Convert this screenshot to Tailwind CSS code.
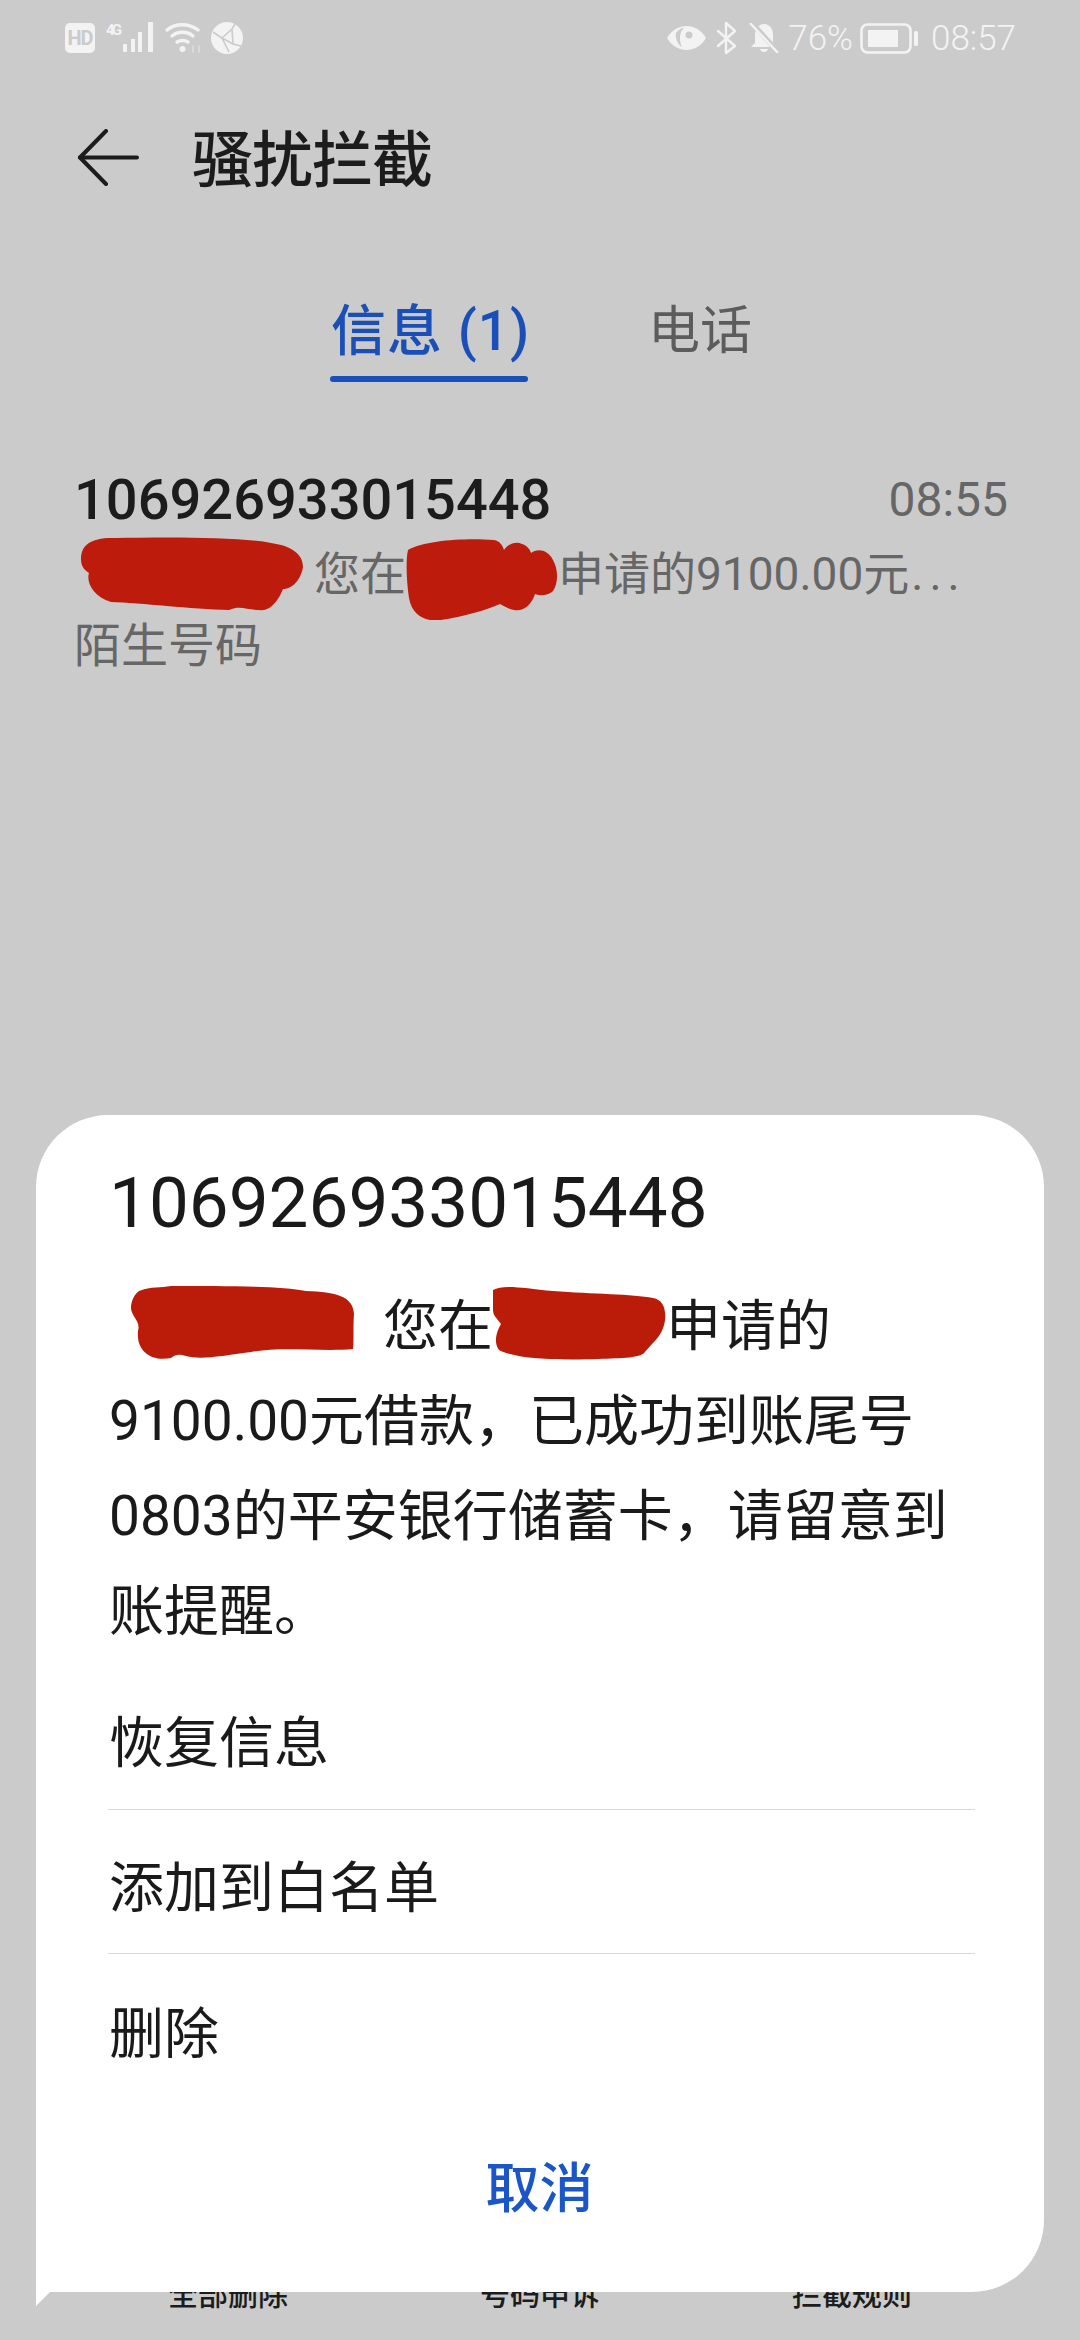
<!DOCTYPE html>
<html lang="zh-CN">
<head>
    <meta charset="UTF-8">
    <meta name="viewport" content="width=device-width, initial-scale=1.0">
    <title>骚扰拦截</title>
    <script src="https://cdn.jsdelivr.net/npm/@tailwindcss/browser@4"></script>
</head>
<body class="bg-[#cbcbcb]">
<div class="relative w-[1080px] h-[2340px] overflow-hidden flex flex-col bg-[#cbcbcb] font-['Roboto','Noto_Sans_CJK_SC',sans-serif]">

    <!-- Status bar -->
    <div class="h-[76px] pt-[22px] pl-[65px] pr-[64px] flex items-start justify-between text-[#f3f3f3]">
        <div class="flex items-center h-[32px]">
            <div class="w-[30px] h-[30px] rounded-[5px] bg-[#f3f3f3] flex items-center justify-center text-[#cbcbcb] text-[20px] font-bold leading-none tracking-[-1px]">HD</div>
            <svg class="w-[49px] h-[32px] ml-[11px]" viewBox="0 0 49 32" fill="#f3f3f3">
                <text x="0" y="13" font-size="15" font-weight="700" font-family="Roboto" textLength="16">4G</text>
                <rect x="17" y="22" width="4" height="8" rx="1"/>
                <rect x="25" y="17" width="4" height="13"/>
                <rect x="32" y="10" width="4" height="20"/>
                <rect x="42" y="0" width="5" height="30"/>
            </svg>
            <svg class="w-[37px] h-[32px] ml-[10px]" viewBox="0 0 37 32" fill="none" stroke="#f3f3f3" stroke-width="3.4" stroke-linecap="round">
                <path d="M2 8C10 1 24 1 33 8"/>
                <path d="M7 14C13 9 22 9 28 14"/>
                <path d="M12 20C15 18 20 18 23 20"/>
                <circle cx="17.500" cy="27" r="3" fill="#f3f3f3" stroke="none"/>
                <path d="M28 24V30M34 24V30" stroke="#dedede" stroke-width="1.600"/>
            </svg>
            <svg class="w-[32px] h-[32px] ml-[9px]" viewBox="0 0 32 32">
                <circle cx="16" cy="16" r="16" fill="#f3f3f3"/>
                <path d="M2 10L11 16L18 30M11 16L21 7L24 2M21 7L22 22L30 24M11 16L22 22" fill="none" stroke="#cbcbcb" stroke-width="1.600"/>
            </svg>
        </div>
        <div class="flex items-center h-[32px]">
            <svg class="w-[39px] h-[26px]" viewBox="0 0 39 26">
                <path d="M0 13C9 -3 30 -3 39 13C30 29 9 29 0 13Z" fill="#f3f3f3"/>
                <path d="M9 8C11 5 14 3 17 3C12 7 12 16 15 22C11 20 8 13 9 8Z" fill="#cbcbcb"/>
                <circle cx="22" cy="10" r="3.500" fill="#cbcbcb"/>
            </svg>
            <svg class="w-[21px] h-[34px] ml-[10px]" viewBox="0 0 21 34" fill="none" stroke="#f3f3f3" stroke-width="2.400" stroke-linejoin="round" stroke-linecap="round">
                <path d="M2 10L19 25L10 32L10 2L19 10L2 25"/>
            </svg>
            <svg class="w-[30px] h-[30px] ml-[12px]" viewBox="0 0 30 30">
                <path d="M15 1C9 1 6 6 6 12V20L2 24H28L24 20V12C24 6 21 1 15 1Z" fill="#f3f3f3"/>
                <path d="M11 26H19C18 30 12 30 11 26Z" fill="#f3f3f3"/>
                <path d="M3 0L30 30" stroke="#cbcbcb" stroke-width="5"/>
                <path d="M1 0L29 30" stroke="#f3f3f3" stroke-width="2.400"/>
            </svg>
            <span class="ml-[9px] text-[35px] font-light leading-none">76%</span>
            <svg class="w-[59px] h-[31px] ml-[7px]" viewBox="0 0 59 31">
                <rect x="1.500" y="1.500" width="49" height="28" rx="6" fill="none" stroke="#f3f3f3" stroke-width="2.600"/>
                <rect x="8" y="7" width="30" height="17" fill="#f3f3f3"/>
                <rect x="54" y="8" width="4" height="15" rx="1.500" fill="#f3f3f3"/>
            </svg>
            <span class="ml-[12px] text-[35px] font-light leading-none">08:57</span>
        </div>
    </div>

    <!-- Header -->
    <div class="h-[164px] flex items-center pl-[77px]">
        <svg class="w-[62px] h-[58px]" viewBox="0 0 62 58" fill="none" stroke="#1c1c1c" stroke-width="4" stroke-linecap="round" stroke-linejoin="round">
            <path d="M29 2L3 28.500L29 55"/>
            <path d="M3 28.500H60"/>
        </svg>
        <h1 class="ml-[53px] pt-[6px] text-[61px] leading-none font-medium text-[#1c1c1c] tracking-[-1px]">骚扰拦截</h1>
    </div>

    <!-- Tabs -->
    <div class="h-[140px] pl-[330px] flex items-start">
        <div class="w-[198px] h-[142px]">
            <div class="pt-[60px] pl-[1px] h-[136px] text-[#1a4fb8] text-[55px] leading-[62px] font-medium whitespace-nowrap tracking-[1px]">信息 (1)</div>
            <div class="h-[6px] rounded-full bg-[#1a4fb8]"></div>
        </div>
        <div class="ml-[120px] pt-[61px] text-[#5c5c5c] text-[52px] leading-[62px]">电话</div>
    </div>

    <!-- Message row -->
    <div class="pt-[85px] pl-[74px] pr-[72px]">
        <div class="flex items-center justify-between h-[70px]">
            <span class="text-[56px] font-medium text-[#1c1c1c] leading-none">106926933015448</span>
            <span class="text-[48px] text-[#666666] leading-none">08:55</span>
        </div>
        <div class="mt-[3px] flex items-center h-[72px] text-[46px] text-[#666666] whitespace-nowrap">
            <svg class="w-[222px] h-[75px] ml-[7px] shrink-0" viewBox="0 0 222 75"><path d="M0 22C0 8 10 0 35 1C90 0 160 0 190 6C212 9 222 18 222 30C220 42 212 52 202 52C198 62 190 75 178 73C165 73 160 68 148 73C110 72 60 66 30 65C12 60 5 45 8 36C2 32 0 28 0 22Z" fill="#bd1c0c"/></svg>
            <span class="ml-[11px]">您在</span>
            <svg class="w-[152px] h-[82px] mt-[10px] shrink-0" viewBox="0 0 152 82"><path d="M2 12C20 2 60 0 88 2C94 3 97 8 98 12C102 6 110 3 116 6C122 8 124 12 125 15C132 10 142 12 147 22C153 32 152 48 146 54C140 58 134 58 129 56C126 66 118 74 108 72C102 71 98 68 94 66C80 72 60 78 35 82C20 84 6 78 3 60C0 40 0 20 2 12Z" fill="#bd1c0c"/></svg>
            <span>申请的9100.00元</span><span class="tracking-[6px] ml-[2px]">...</span>
        </div>
        <div class="h-[70px] flex items-center text-[47px] text-[#666666] leading-none">陌生号码</div>
    </div>

    <!-- Bottom bar, mostly covered by the sheet -->
    <div class="mt-auto h-[78px] grid grid-cols-3 px-[72px] text-[30px] leading-none text-[#1c1c1c] text-center font-medium">
        <span class="pt-[18px]">全部删除</span>
        <span class="pt-[18px]">号码申诉</span>
        <span class="pt-[18px]">拦截规则</span>
    </div>

    <!-- Message sheet -->
    <div class="absolute left-[36px] top-[1115px] w-[1008px] h-[1177px] bg-white rounded-t-[72px] rounded-br-[72px]">
        <div class="absolute left-0 top-[1177px] w-0 h-0 border-l-[14px] border-l-white border-b-[14px] border-b-transparent"></div>
        <div class="pl-[73px] pt-[52px] pr-[70px]">
            <div class="h-[70px] flex items-center text-[71px] leading-none text-[#1a1a1a]">106926933015448</div>
            <div class="mt-[42px] text-[55px] leading-[95px] text-[#1a1a1a]">
                <div class="flex items-center h-[95px] whitespace-nowrap">
                    <svg class="w-[223px] h-[74px] ml-[22px] mb-[8px] shrink-0" viewBox="0 0 223 74"><path d="M8 5C20 0 30 2 40 0C90 0 150 0 175 5C205 6 222 10 223 28C222 40 223 55 222 63C190 66 150 60 120 66C90 70 70 74 55 70C48 68 45 68 40 72C20 76 5 65 7 45C10 35 0 30 0 22C0 14 4 8 8 5Z" fill="#bb1c0a"/></svg>
                    <span class="ml-[29px]">您在</span>
                    <svg class="w-[173px] h-[74px] mb-[8px] shrink-0" viewBox="0 0 173 74"><path d="M0 4C10 -2 30 2 60 5C100 8 140 8 160 12C170 14 173 22 172 34C170 50 160 56 152 66C148 72 130 72 105 73C70 74 25 74 6 64C0 56 4 45 8 38C4 32 0 30 0 24Z" fill="#bb1c0a"/></svg>
                    <span>申请的</span>
                </div>
                <div class="whitespace-nowrap">9100.00元借款，已成功到账尾号</div>
                <div class="whitespace-nowrap">0803的平安银行储蓄卡，请留意到</div>
                <div>账提醒。</div>
            </div>
            <div class="mt-[24px] text-[55px] text-[#1a1a1a] leading-none">
                <div class="h-[127px] flex items-center border-b border-[#d9d9d9] -mr-[1px] -ml-[1px] pl-[1px] pb-[6px]">恢复信息</div>
                <div class="h-[144px] flex items-center border-b border-[#d9d9d9] -mr-[1px] -ml-[1px] pl-[1px] pt-[14px]">添加到白名单</div>
                <div class="h-[144px] flex items-center pt-[16px]">删除</div>
            </div>
            <div class="mt-[65px] pr-[4px] text-center text-[54px] leading-none font-medium text-[#1a56c8]">取消</div>
        </div>
    </div>
</div>
</body>
</html>
